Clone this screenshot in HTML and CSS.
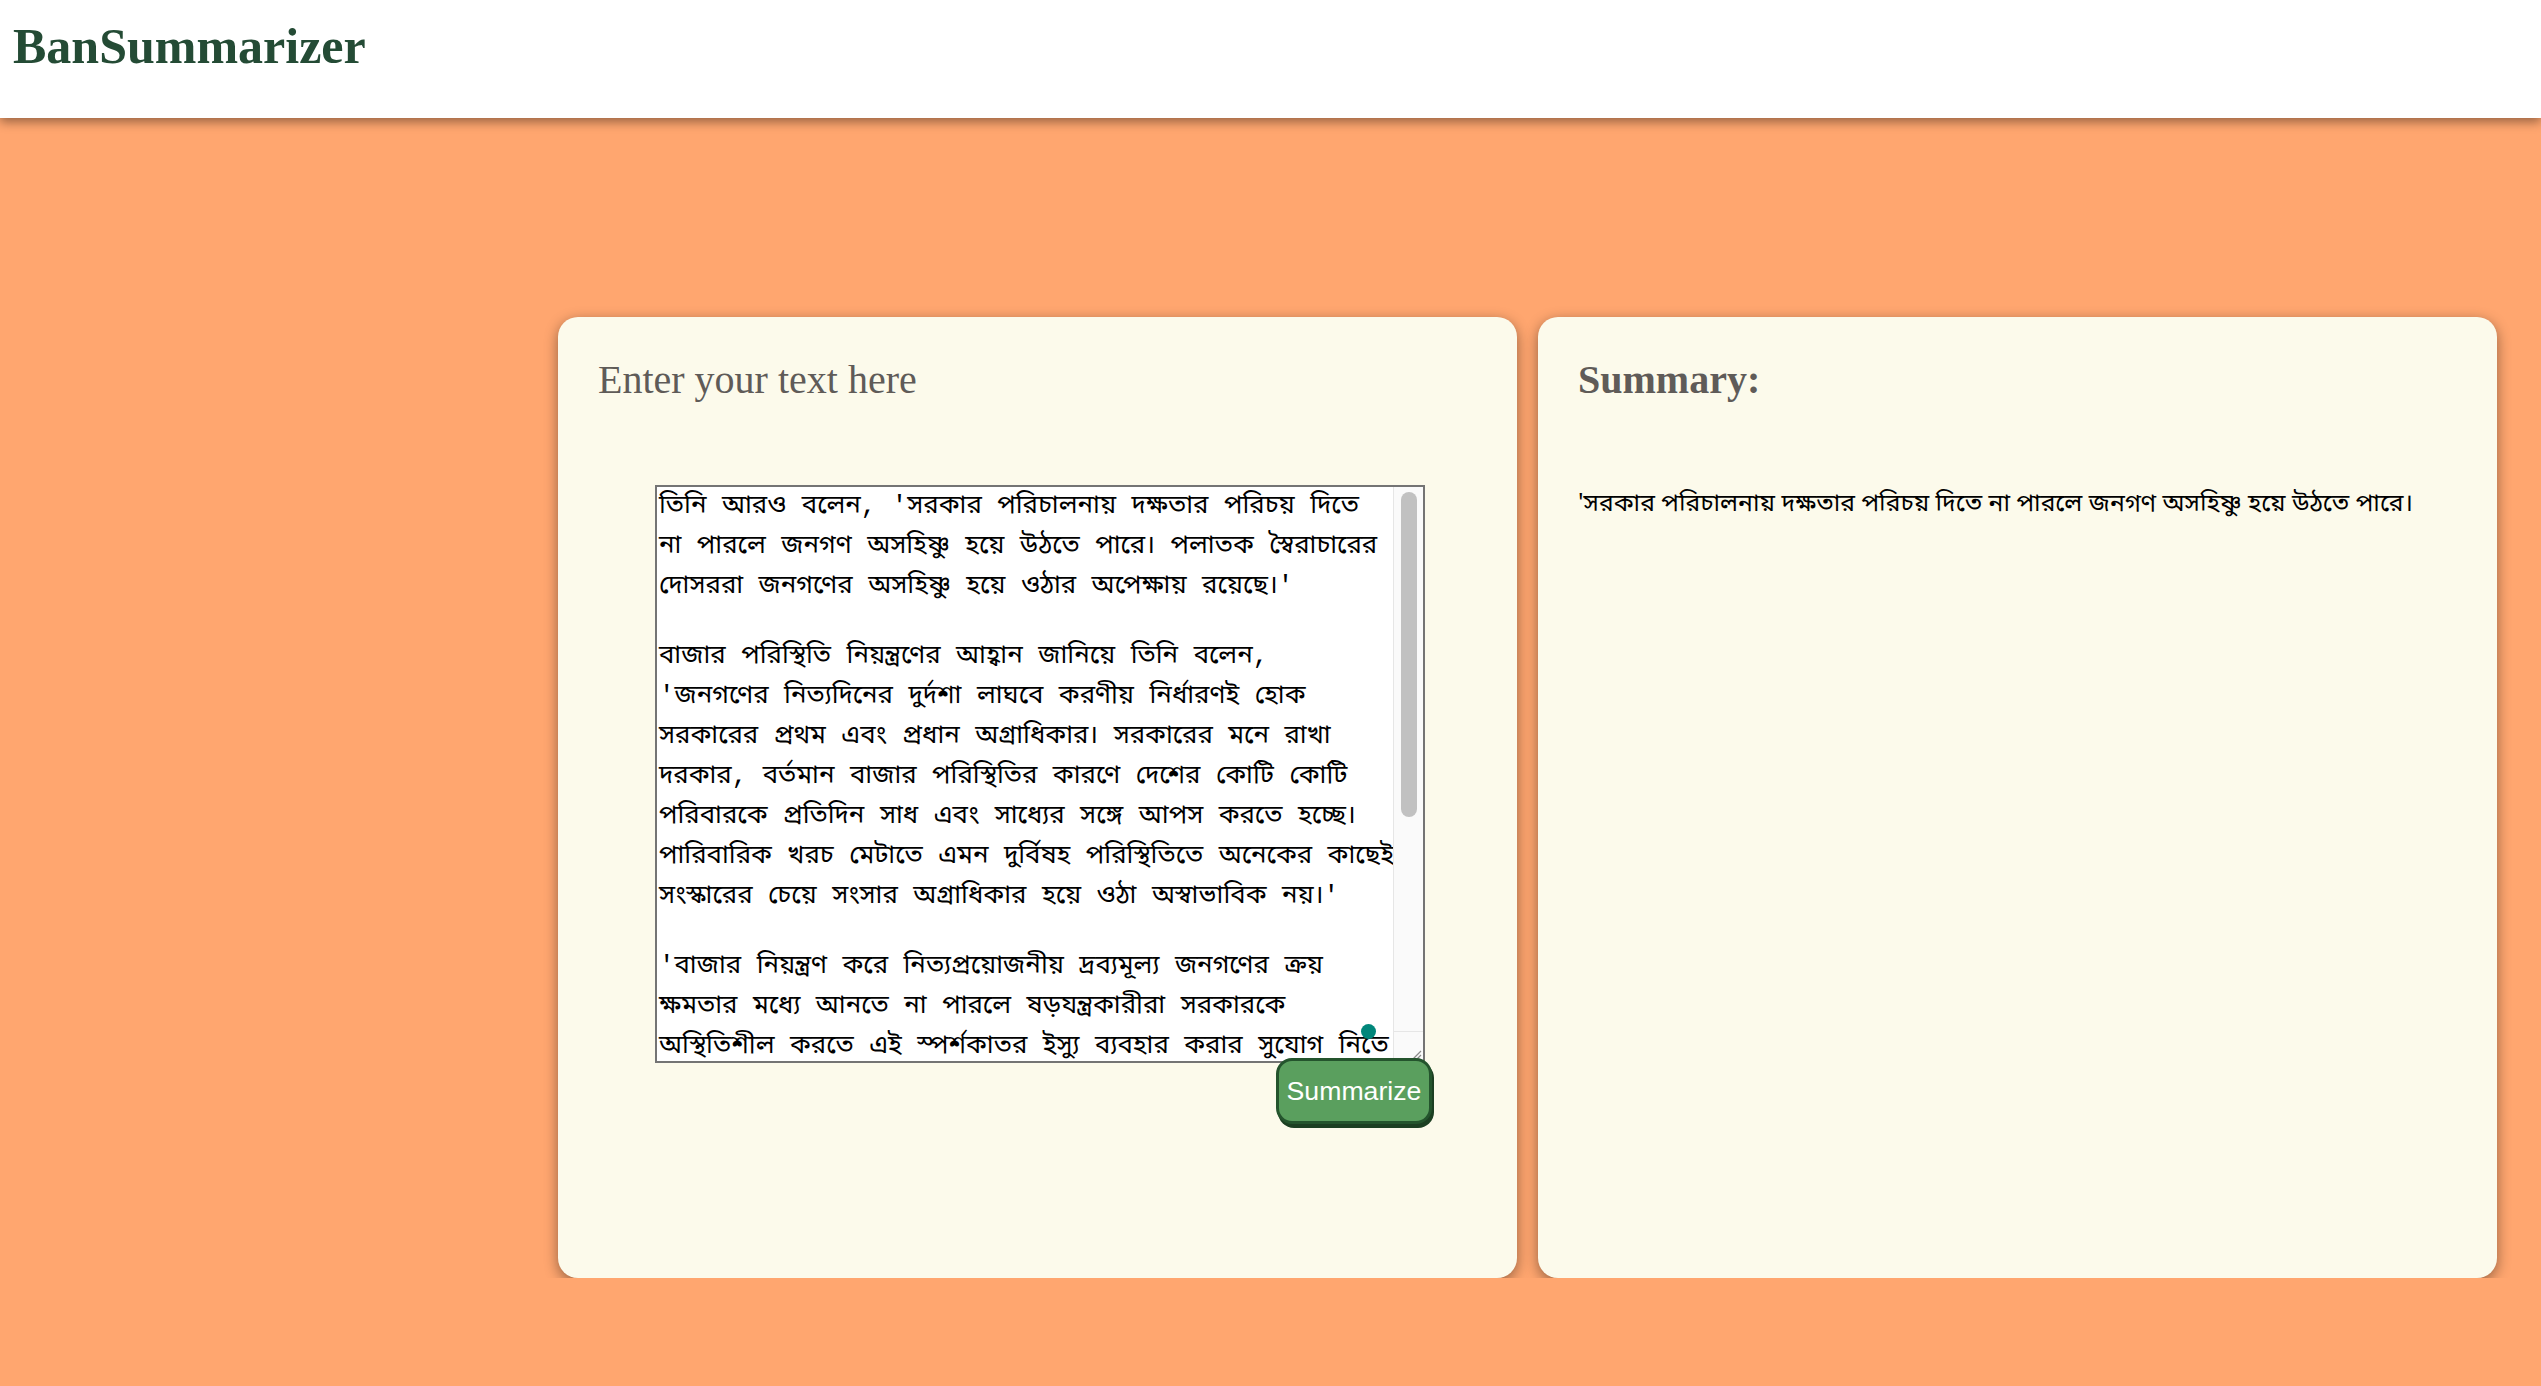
FILE: index.html
```html
<!DOCTYPE html>
<html lang="bn">
<head>
<meta charset="utf-8">
<title>BanSummarizer</title>
<link rel="stylesheet" href="styles.css">
</head>
<body>
<header class="topbar">
  <h1 class="brand">BanSummarizer</h1>
</header>
<main class="workspace">
  <section class="card">
    <h2 class="card-title">Enter your text here</h2>
    <form class="input-form">
      <div class="input-box">
        <div class="input-text" role="textbox" aria-multiline="true">
          <p>তিনি আরও বলেন, 'সরকার পরিচালনায় দক্ষতার পরিচয় দিতে<br>না পারলে জনগণ অসহিষ্ণু হয়ে উঠতে পারে। পলাতক স্বৈরাচারের<br>দোসররা জনগণের অসহিষ্ণু হয়ে ওঠার অপেক্ষায় রয়েছে।'</p>
          <p>বাজার পরিস্থিতি নিয়ন্ত্রণের আহ্বান জানিয়ে তিনি বলেন,<br>'জনগণের নিত্যদিনের দুর্দশা লাঘবে করণীয় নির্ধারণই হোক<br>সরকারের প্রথম এবং প্রধান অগ্রাধিকার। সরকারের মনে রাখা<br>দরকার, বর্তমান বাজার পরিস্থিতির কারণে দেশের কোটি কোটি<br>পরিবারকে প্রতিদিন সাধ এবং সাধ্যের সঙ্গে আপস করতে হচ্ছে।<br>পারিবারিক খরচ মেটাতে এমন দুর্বিষহ পরিস্থিতিতে অনেকের কাছেই<br>সংস্কারের চেয়ে সংসার অগ্রাধিকার হয়ে ওঠা অস্বাভাবিক নয়।'</p>
          <p>'বাজার নিয়ন্ত্রণ করে নিত্যপ্রয়োজনীয় দ্রব্যমূল্য জনগণের ক্রয়<br>ক্ষমতার মধ্যে আনতে না পারলে ষড়যন্ত্রকারীরা সরকারকে<br>অস্থিতিশীল করতে এই স্পর্শকাতর ইস্যু ব্যবহার করার সুযোগ নিতে<br>পারে। এ বিষয়ে সরকারকে সর্বোচ্চ সতর্ক থাকতে হবে।'</p>
        </div>
        <div class="scrollbar" aria-hidden="true">
          <div class="scroll-track">
            <div class="scroll-thumb"></div>
          </div>
          <div class="scroll-corner">
            <svg class="grip" width="12" height="12" viewBox="0 0 12 12">
              <path d="M11 3 L3 11 M11 7 L7 11" stroke="#8a8a8a" stroke-width="1.2" fill="none"/>
            </svg>
          </div>
        </div>
        <span class="assist-dot"></span>
      </div>
      <button type="button" class="btn-summarize">Summarize</button>
    </form>
  </section>
  <section class="card">
    <h2 class="card-title card-title--bold">Summary:</h2>
    <p class="summary-text">'সরকার পরিচালনায় দক্ষতার পরিচয় দিতে না পারলে জনগণ অসহিষ্ণু হয়ে উঠতে পারে।</p>
  </section>
</main>
</body>
</html>
```
FILE: styles.css
```css
html, body {
  margin: 0;
  padding: 0;
}

html {
  background: #ffa66f;
}

body {
  background: #ffa66f;
  font-family: "Liberation Serif", "Times New Roman", serif;
}

.topbar {
  background: #ffffff;
  height: 118px;
  box-shadow: 0 4px 10px rgba(0, 0, 0, 0.4);
  position: relative;
  z-index: 1;
  display: flex;
  align-items: flex-start;
}

.brand {
  margin: 0;
  padding: 18px 0 0 13px;
  font-family: "Liberation Serif", "Times New Roman", serif;
  font-weight: bold;
  font-size: 50px;
  line-height: 57px;
  color: #244b35;
}

.workspace {
  display: flex;
  justify-content: flex-end;
  gap: 21px;
  padding: 199px 44px 0 0;
}

.card {
  width: 959px;
  height: 961px;
  box-sizing: border-box;
  padding: 40px 40px;
  background: #fcfaeb;
  border-radius: 20px;
  box-shadow: 0 4px 14px rgba(0, 0, 0, 0.42);
}

.card-title {
  margin: 0;
  font-family: "Liberation Serif", "Times New Roman", serif;
  font-size: 40px;
  font-weight: normal;
  line-height: 46px;
  color: #5f5b58;
}

.card-title--bold {
  font-weight: bold;
}

.input-form {
  display: flex;
  flex-direction: column;
  align-items: flex-end;
  width: 770px;
  margin: 82px 0 0 57px;
}

.input-box {
  position: relative;
  display: flex;
  width: 770px;
  height: 578px;
  box-sizing: border-box;
  border: 2px solid #747474;
  background: #ffffff;
}

.input-text {
  flex: 1;
  overflow: hidden;
  padding: 0 2px;
  color: #000000;
  font-family: "Liberation Mono", "Noto Sans Bengali", "Lohit Bengali", "FreeSerif", monospace;
  font-size: 25.8px;
  line-height: 40px;
  white-space: nowrap;
}

.input-text p {
  margin: 0 0 30px;
}

.scrollbar {
  width: 30px;
  flex: none;
  display: flex;
  flex-direction: column;
  background: #fafafa;
  border-left: 1px solid #e6e6e6;
  box-sizing: border-box;
}

.scroll-track {
  flex: 1;
  padding: 5px 6px 0 7px;
  border-bottom: 1px solid #e6e6e6;
}

.scroll-thumb {
  height: 325px;
  border-radius: 8px;
  background: #c1c1c1;
}

.scroll-corner {
  height: 29px;
  display: flex;
  align-items: flex-end;
  justify-content: flex-end;
}

.grip {
  display: block;
  margin: 0 1px 1px 0;
}

.assist-dot {
  position: absolute;
  left: 704px;
  top: 537px;
  width: 15px;
  height: 15px;
  border-radius: 50%;
  background: #00867a;
}

.btn-summarize {
  position: relative;
  margin: -5px -7px 0 0;
  width: 156px;
  height: 66px;
  box-sizing: border-box;
  padding: 0;
  border: 3px solid #24542d;
  border-radius: 16px;
  background: #5a9f5e;
  color: #ffffff;
  font-family: "Liberation Sans", Arial, sans-serif;
  font-size: 26.67px;
  box-shadow: 2px 4px 0 #1c3f22;
}

.summary-text {
  margin: 82px 0 0;
  font-family: "Noto Sans Bengali", "Lohit Bengali", "FreeSans", "Noto Sans", sans-serif;
  font-size: 24.7px;
  line-height: 40px;
  white-space: nowrap;
  color: #000000;
}
```
